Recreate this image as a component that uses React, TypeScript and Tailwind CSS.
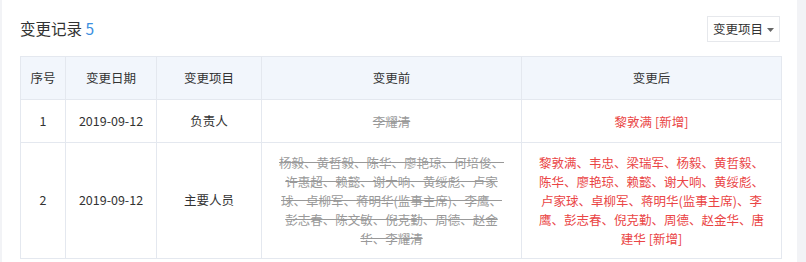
const ROWS = [
  {
    no: 1,
    date: "2019-09-12",
    item: "负责人",
    before: "李耀清",
    after: "黎敦满",
  },
  {
    no: 2,
    date: "2019-09-12",
    item: "主要人员",
    before:
      "杨毅、黄哲毅、陈华、廖艳琼、何培俊、许惠超、赖懿、谢大响、黄绥彪、卢家球、卓柳军、蒋明华(监事主席)、李鹰、彭志春、陈文敏、倪克勤、周德、赵金华、李耀清",
    after:
      "黎敦满、韦忠、梁瑞军、杨毅、黄哲毅、陈华、廖艳琼、赖懿、谢大响、黄绥彪、卢家球、卓柳军、蒋明华(监事主席)、李鹰、彭志春、倪克勤、周德、赵金华、唐建华",
  },
];

const cell = "border border-[#e4e8ef] text-center align-middle";
const wide = "border border-[#e4e8ef] px-[15px] text-center align-middle";

export default function App() {
  return (
    <div
      className="h-[262px] w-[806px] overflow-hidden bg-[#f2f3f6] pl-[2px] pr-[9px] text-[#333]"
      style={{ fontFamily: '"Noto Sans CJK SC", "Noto Sans", sans-serif' }}
    >
      <div className="h-full bg-white pl-[18px] pr-[17px] pt-[16px]">
        <div className="flex h-[26px] items-center justify-between">
          <h2 className="text-[15.5px] font-normal leading-none">
            变更记录 <span className="text-[#3b8fe0]">5</span>
          </h2>
          <button className="flex h-[26px] w-[73px] items-center justify-center gap-[4px] border border-[#e6e8ec] bg-white text-[12.5px] text-[#333]">
            变更项目
            <svg width="7" height="4" viewBox="0 0 7 4" className="mt-[1px]">
              <path d="M0 0h7L3.5 4z" fill="#666" />
            </svg>
          </button>
        </div>
        <table className="mt-[14px] w-[761px] table-fixed border-collapse text-[12.5px]">
          <colgroup>
            <col className="w-[45px]" />
            <col className="w-[91px]" />
            <col className="w-[105px]" />
            <col className="w-[260px]" />
            <col className="w-[260px]" />
          </colgroup>
          <thead>
            <tr className="h-[43px] bg-[#f2f6fc]">
              <th className={`${cell} font-normal`}>序号</th>
              <th className={`${cell} font-normal`}>变更日期</th>
              <th className={`${cell} font-normal`}>变更项目</th>
              <th className={`${wide} font-normal`}>变更前</th>
              <th className={`${wide} font-normal`}>变更后</th>
            </tr>
          </thead>
          <tbody>
            {ROWS.map((r) => (
              <tr key={r.no} className={r.no === 1 ? "h-[43px]" : ""}>
                <td className={cell}>{r.no}</td>
                <td className={cell}>{r.date}</td>
                <td className={cell}>{r.item}</td>
                <td className={`${wide} py-[10px] leading-[19px] text-[#999] line-through`}>
                  {r.before}
                </td>
                <td className={`${wide} py-[10px] leading-[19px] text-[#ea4545]`}>
                  {`${r.after} [新增]`}
                </td>
              </tr>
            ))}
          </tbody>
        </table>
      </div>
    </div>
  );
}
